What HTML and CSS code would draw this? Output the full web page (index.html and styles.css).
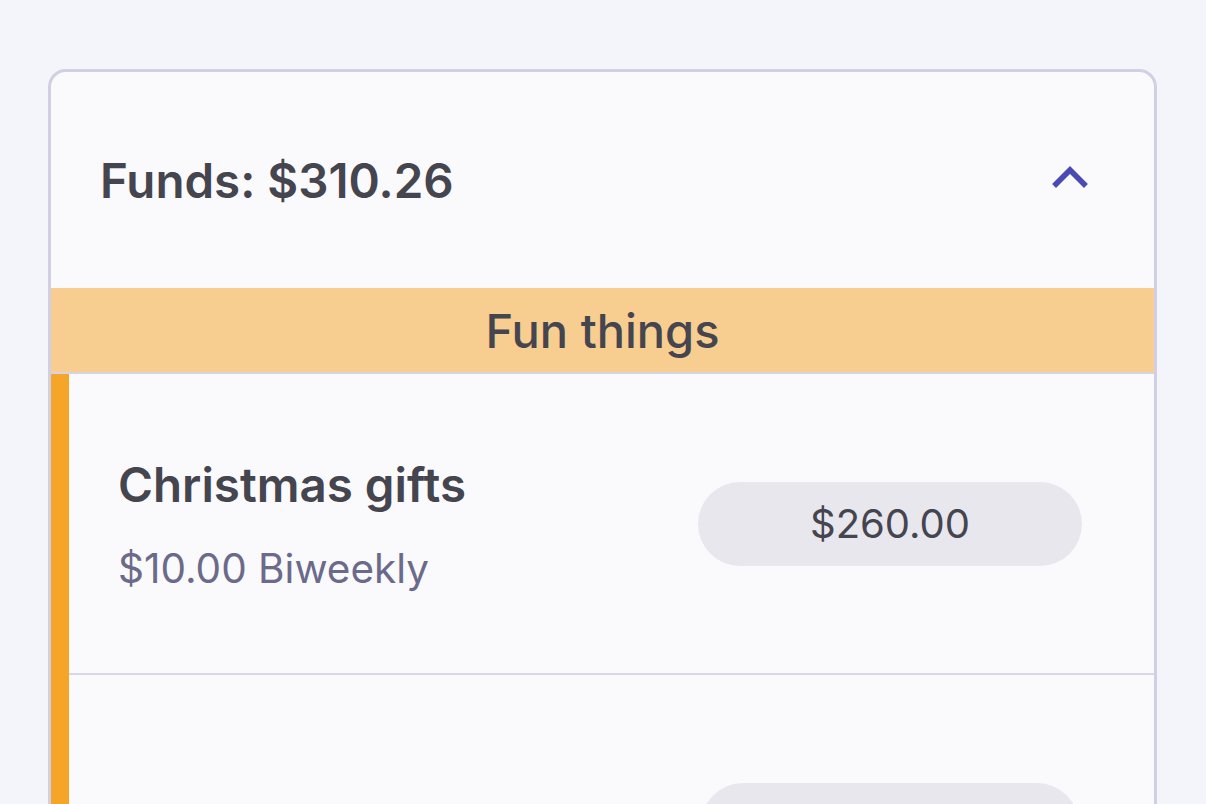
FILE: index.html
```html
<!DOCTYPE html>
<html>
<head>
<meta charset="utf-8">
<link rel="stylesheet" href="styles.css">
</head>
<body>
<div class="page">
  <section class="card">
    <header class="card-header">
      <h1 class="funds">Funds: $310.26</h1>
      <button class="toggle" aria-label="Collapse">
        <svg width="36" height="22" viewBox="0 0 36 22"><polyline points="4,18 18,4 32,18" fill="none" stroke="#4a4ab4" stroke-width="5.5" stroke-linecap="square" stroke-linejoin="miter"/></svg>
      </button>
    </header>
    <div class="group-title">Fun things</div>
    <div class="item">
      <div class="strip"></div>
      <div class="item-body">
        <div class="item-text">
          <div class="item-name">Christmas gifts</div>
          <div class="item-sub">$10.00 Biweekly</div>
        </div>
        <div class="pill">$260.00</div>
      </div>
    </div>
    <div class="item">
      <div class="strip"></div>
      <div class="item-body item-body-next">
        <div class="pill pill-next"></div>
      </div>
    </div>
  </section>
</div>
</body>
</html>
```
FILE: styles.css
```css
html, body {
  margin: 0;
  padding: 0;
  background: #f4f5fa;
  font-family: Inter, "Noto Sans", sans-serif;
  color: #45454f;
}
.page {
  padding: 69px 49px 0 48px;
}
.card {
  border: 3px solid #d0cfe3;
  border-radius: 18px;
  background: #fafafc;
  overflow: hidden;
}
.card-header {
  height: 216px;
  display: flex;
  align-items: center;
  justify-content: space-between;
  padding: 0 66px 0 49px;
}
.funds {
  margin: 0;
  font-size: 47.5px;
  font-weight: 600;
  color: #45454f;
}
.toggle {
  border: 0;
  background: none;
  padding: 0;
  display: flex;
  margin-top: -6px;
}
.group-title {
  height: 84px;
  background: #f7cd90;
  border-bottom: 2px solid #d6d4e4;
  display: flex;
  align-items: center;
  justify-content: center;
  font-size: 47px;
  font-weight: 500;
  color: #45454f;
}
.item {
  display: flex;
  height: 301px;
}
.strip {
  width: 18px;
  background: #f5a628;
  flex: none;
}
.item-body {
  flex: 1;
  display: flex;
  align-items: center;
  justify-content: space-between;
  padding: 0 72px 0 49px;
  border-bottom: 2px solid #d8d6e8;
}
.item-body-next {
  justify-content: flex-end;
}
.item-text {
  display: flex;
  flex-direction: column;
  gap: 32px;
  margin-top: 2px;
}
.item-name {
  font-size: 47.5px;
  font-weight: 600;
  line-height: 1.2;
  color: #45454f;
}
.item-sub {
  font-size: 40.5px;
  font-weight: 400;
  line-height: 1.2;
  color: #6b6a8a;
}
.pill {
  width: 384px;
  height: 84px;
  border-radius: 42px;
  background: #e8e7ed;
  display: flex;
  align-items: center;
  justify-content: center;
  font-size: 40px;
  color: #45454f;
}
.pill-next {
  width: 378px;
  margin-right: 3px;
}
```
